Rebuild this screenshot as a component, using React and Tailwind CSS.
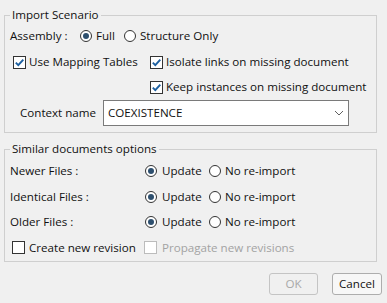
import React from "react";

const font = { fontFamily: '"Open Sans", "Noto Sans", sans-serif' };

function Radio({ checked }) {
  return (
    <span className="relative inline-flex h-[12px] w-[12px] shrink-0 items-center justify-center rounded-full border border-[#333333] bg-white">
      {checked && <span className="h-[6px] w-[6px] rounded-full bg-[#2d4f6e]" />}
    </span>
  );
}

function Check({ checked, disabled }) {
  return (
    <span
      className={
        "inline-flex h-[13px] w-[13px] shrink-0 items-center justify-center border bg-white " +
        (disabled ? "border-[#bcbcbc]" : "border-[#333333]")
      }
    >
      {checked && (
        <svg width="11" height="11" viewBox="0 0 11 11">
          <path d="M1.8 5.6 L4.3 8.1 L9.3 2.6" fill="none" stroke="#1c5fa0" strokeWidth="1.9" />
        </svg>
      )}
    </span>
  );
}

function OptRow({ label }) {
  return (
    <div className="flex items-center">
      <span className="w-[140px] pl-[5px]">{label}</span>
      <Radio checked />
      <span className="ml-[5px] w-[47px]">Update</span>
      <Radio />
      <span className="ml-[4px]">No re-import</span>
    </div>
  );
}

export default function App() {
  return (
    <div
      className="h-[303px] w-[387px] bg-[#f0f0f0] pl-[4px] pr-[5px] pt-[7px] text-[11.6px] leading-[16px] text-[#111111]"
      style={font}
    >
      <fieldset className="w-[373px] border border-[#cfcfcf] pb-[6px]">
        <legend className="ml-[5px] px-[2px]">Import Scenario</legend>
        <div className="flex h-[26px] items-center pl-[5px]">
          <span className="w-[70px]">Assembly :</span>
          <Radio checked />
          <span className="ml-[4px] mr-[9px]">Full</span>
          <Radio />
          <span className="ml-[4px]">Structure Only</span>
        </div>
        <div className="flex h-[26px] items-center pl-[8px]">
          <Check checked />
          <span className="ml-[3px] w-[121px]">Use Mapping Tables</span>
          <Check checked />
          <span className="ml-[3px]">Isolate links on missing document</span>
        </div>
        <div className="flex h-[24px] items-center pl-[145px]">
          <Check checked />
          <span className="ml-[3px]">Keep instances on missing document</span>
        </div>
        <div className="mt-[1px] flex items-center pl-[15px]">
          <span className="w-[83px]">Context name</span>
          <div className="flex h-[26px] w-[246px] items-center justify-between border border-[#7a7a7a] bg-white pl-[4px] pr-[4px]">
            <span>COEXISTENCE</span>
            <svg width="10" height="6" viewBox="0 0 10 6">
              <path d="M1 1 L5 5 L9 1" fill="none" stroke="#606060" strokeWidth="1" />
            </svg>
          </div>
        </div>
      </fieldset>

      <fieldset className="mt-[8px] w-[373px] border border-[#cfcfcf] pb-[1px] pt-[1px]">
        <legend className="ml-[5px] px-[2px]">Similar documents options</legend>
        <div className="h-[26px] flex items-center"><OptRow label="Newer Files :" /></div>
        <div className="h-[25px] flex items-center"><OptRow label="Identical Files :" /></div>
        <div className="h-[26px] flex items-center"><OptRow label="Older Files :" /></div>
        <div className="flex h-[25px] items-center pl-[7px]">
          <Check />
          <span className="ml-[4px] w-[115px]">Create new revision</span>
          <Check disabled />
          <span className="ml-[5px] text-[#a3a3a3]">Propagate new revisions</span>
        </div>
      </fieldset>

      <div className="mt-[11px] flex justify-end gap-[14px]">
        <button className="h-[22px] w-[49px] rounded-[3px] border border-[#c4c4c4] bg-[#f0f0f0] text-[#a8a8a8]">
          OK
        </button>
        <button className="h-[22px] w-[50px] rounded-[3px] border border-[#adadad] bg-[#f7f7f7] text-[#111111]">
          Cancel
        </button>
      </div>
    </div>
  );
}
